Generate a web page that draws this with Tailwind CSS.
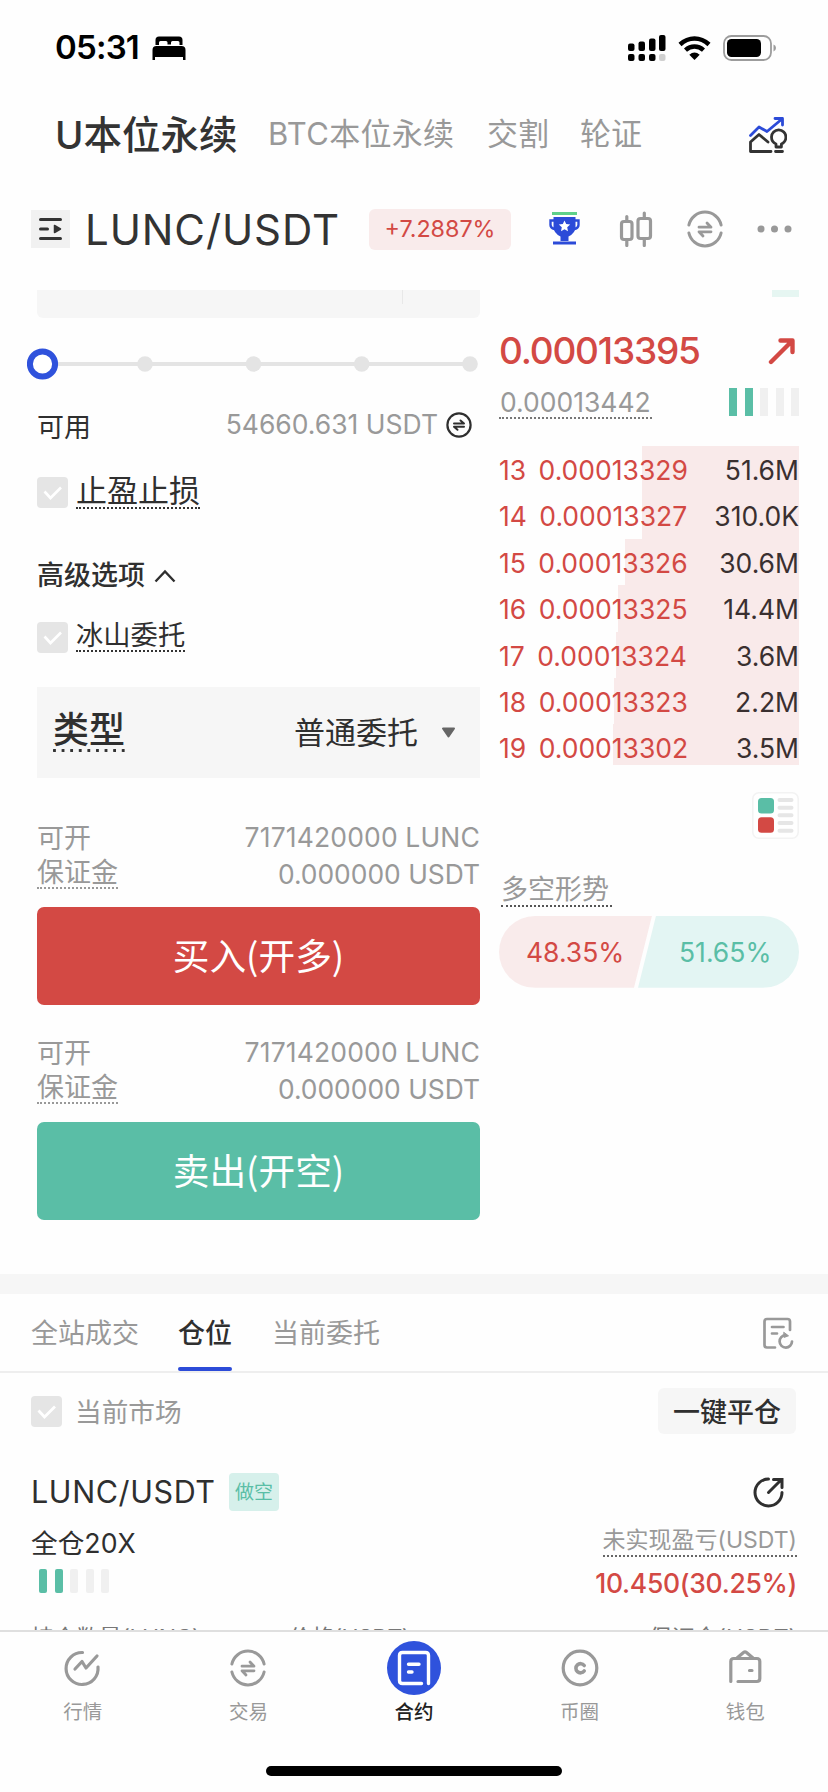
<!DOCTYPE html>
<html lang="zh-CN">
<head>
<meta charset="utf-8">
<title>LUNC/USDT</title>
<script src="https://cdn.jsdelivr.net/npm/@tailwindcss/browser@4"></script>
</head>
<body class="w-[828px] h-[1792px] overflow-hidden bg-[#fefefe] text-[#2f2f2f] font-[Inter,'Noto_Sans_CJK_SC',sans-serif] whitespace-nowrap">
<div class="flex flex-col h-[1630px] overflow-hidden">

  <!-- status bar -->
  <div class="flex items-center justify-between h-[94px] pt-px pl-[55px] pr-[51px] shrink-0 text-black">
    <div class="flex items-center">
      <span class="text-[33px] font-semibold tracking-[-0.800px] w-[97px]">05:31</span>
      <svg class="w-[34px] h-[24px]" viewBox="0 0 34 24"><path d="M3.500 9V4Q3.500 .5 7 .5h20q3.500 0 3.500 3.500V9h-3V6.500Q27.500 5 26 5h-5.500Q19 5 19 6.500V8.500h-3.500V6.500Q15.500 5 14 5H8.500Q7 5 7 6.500V9z"/><path d="M.5 24V14q0-4 4-4h25q4 0 4 4v10h-2.500v-3H3v3z"/></svg>
    </div>
    <div class="flex items-center">
      <svg class="w-[38px] h-[28px]" viewBox="0 0 38 28"><rect x="0" y="9.500" width="6.500" height="7.500" rx="2"/><rect x="10.500" y="7.500" width="6.500" height="9.500" rx="2"/><rect x="21" y="4.500" width="6.500" height="12.500" rx="2"/><rect x="31" y="1" width="6.500" height="16" rx="2"/><rect x="0" y="20" width="6.500" height="7" rx="2"/><rect x="10.500" y="20" width="6.500" height="7" rx="2"/><rect x="21" y="20" width="6.500" height="7" rx="2"/><rect x="31" y="20" width="6.500" height="7" rx="2" fill="#d0d0d0"/></svg>
      <svg class="ml-[12px] w-[33px] h-[24px]" viewBox="0 0 33 24" fill="none" stroke="#000" stroke-width="4.500"><path d="M2 8.500Q8.500 2.500 16.500 2.500T31 8.500"/><path d="M7.500 14.200Q11.500 10.600 16.500 10.600t9 3.600"/><path d="M11.300 18.700Q16.500 14.500 21.700 18.700L16.500 24z" fill="#000" stroke="none"/></svg>
      <svg class="ml-[12px] w-[54px] h-[26px]" viewBox="0 0 54 26"><rect x="1" y="1" width="47" height="24" rx="7.500" fill="none" stroke="#9c9c9c" stroke-width="1.800"/><rect x="4" y="4" width="34" height="18" rx="4.500"/><path d="M50.500 9.500q2.500 .8 2.500 3.500t-2.500 3.500z" fill="#9c9c9c"/></svg>
    </div>
  </div>

  <!-- market type tabs -->
  <div class="flex items-center h-[80px] pt-px pl-[55px] pr-[41px] shrink-0 text-[31px] text-[#999]">
    <span class="w-[213px] pt-[2px] text-[38.500px] font-medium text-[#333]">U本位永续</span>
    <span class="w-[219px] tracking-[0.300px]">BTC本位永续</span>
    <span class="w-[93px]">交割</span>
    <span>轮证</span>
    <svg class="ml-auto w-[38px] h-[36px]" viewBox="0 0 38 36" fill="none" stroke-width="2.800" stroke-linecap="round" stroke-linejoin="round"><path d="M1.500 18.500 10 10l8 4.500L33 2M26 1.500h7.500v6.500" stroke="#2c4bd8"/><path d="M19 25 10 17.500 1.500 25v9.500H22" stroke="#333"/><path d="M27 30v-3q-4.500-2-4.500-7a7.200 7.200 0 0 1 14.400 0q0 5-4.500 7v3zM26.500 34.500h7" stroke="#333" fill="#fefefe"/></svg>
  </div>

  <!-- pair header -->
  <div class="flex items-center h-[110px] pl-[31px] pr-[36px] shrink-0">
    <span class="w-[39px] h-[38px] bg-[#f1f1f1]"><svg class="w-[39px] h-[38px]" viewBox="0 0 39 38" fill="none" stroke="#333" stroke-width="3" stroke-linecap="round"><path d="M9.500 9.500h20M9.500 19h7M9.500 28.500h20"/><path d="M23.500 15.500v7l6-3.500z" fill="#333" stroke-width="1.500" stroke-linejoin="round"/></svg></span>
    <span class="ml-[15px] w-[284px] text-[42px] text-[#333] tracking-[0.900px]">LUNC/USDT</span>
    <span class="flex items-center justify-center w-[142px] h-[41px] rounded-[6px] bg-[#f9ebeb] text-[#d34944] text-[23.300px]">+7.2887%</span>
    <svg class="ml-[37px] w-[33px] h-[34px]" viewBox="0 0 33 34"><path d="M4 0h25v3H4z" fill="#5fd08a"/><path d="M5.500 5h22v10q0 6-7 9.500v4.500h-8V24.500Q5.500 21 5.500 15zM5 29.500h23v3H5z" fill="#2c4bd8"/><path d="M6 8.500H2.500V13q0 3 4 4M27 8.500h3.500V13q0 3-4 4" fill="none" stroke="#2c4bd8" stroke-width="2.400"/><path d="m16.500 8.500 1.700 3.600 4 .5-3 2.700.8 4-3.500-2-3.500 2 .8-4-3-2.700 4-.5z" fill="#fff"/></svg>
    <svg class="ml-[38px] w-[34px] h-[36px]" viewBox="0 0 34 36" fill="none" stroke="#999" stroke-width="3.200" stroke-linecap="round"><rect x="2.500" y="10.500" width="10.500" height="18" rx="2.500"/><rect x="19" y="7.500" width="12.500" height="20" rx="2.500"/><path d="M7.800 5.500v5M7.800 29v5.500M25.300 2v5M25.300 28v6.500"/></svg>
    <svg class="ml-[34px] w-[36px] h-[38px]" viewBox="0 0 36 38" fill="none" stroke="#999" stroke-width="3" stroke-linecap="round" stroke-linejoin="round"><path d="M1.900 15a16.500 16.500 0 0 1 32.200 0M1.900 23a16.500 16.500 0 0 0 32.200 0"/><path d="M12 17.200h12l-4-4.200M24 21.800H12l4 4.200" stroke-width="2.800"/></svg>
    <svg class="ml-[33px] w-[36px] h-[8px]" viewBox="0 0 36 8" fill="#999"><circle cx="5" cy="4" r="3.500"/><circle cx="18.500" cy="4" r="3.500"/><circle cx="32" cy="4" r="3.500"/></svg>
  </div>

  <!-- order form + book -->
  <div class="flex h-[990px] shrink-0 pt-[6px] pl-[37px] pr-[29px]">
    <div class="flex flex-col w-[443px]">
      <div class="h-[28px] bg-[#f6f6f6] rounded-b-[6px] pl-[365px] shrink-0"><div class="w-px h-[14px] bg-[#e8e8e8]"></div></div>
      <svg class="mt-[23px] -ml-[10px] w-[453px] h-[46px] shrink-0" viewBox="27 341 453 46"><path d="M50 364h420" stroke="#e4e4e4" stroke-width="4"/><g fill="#e4e4e4"><circle cx="145" cy="364" r="7.800"/><circle cx="253.500" cy="364" r="7.800"/><circle cx="361.700" cy="364" r="7.800"/><circle cx="470" cy="364" r="7.800"/></g><circle cx="42.500" cy="364" r="12.600" fill="#fff" stroke="#2f52dc" stroke-width="6"/></svg>
      <div class="flex items-center mt-[19px] h-[40px] shrink-0">
        <span class="text-[27px] pt-[5px]">可用</span>
        <span class="ml-auto text-[26.500px] text-[#999] pb-[3px]">54660.631 USDT</span>
        <svg class="ml-[8px] mr-[8px] mb-[3px] w-[26px] h-[26px]" viewBox="0 0 26 26" fill="none" stroke="#2f2f2f" stroke-width="2.200" stroke-linecap="round" stroke-linejoin="round"><circle cx="13" cy="13" r="11.600"/><path d="M8 11.500h10l-3.500-3M18 14.800H8l3.500 3" stroke-width="2"/></svg>
      </div>
      <div class="flex items-start mt-[31px] h-[32px] shrink-0">
        <span class="w-[31px] h-[31px] rounded-[4px] bg-[#e5e5e5]"><svg class="w-[31px] h-[31px]" viewBox="0 0 31 31" fill="none" stroke="#fff" stroke-width="2.600"><path d="m7.500 14.500 6 6.500L24 10.500"/></svg></span>
        <span class="ml-[8px] h-[32px] leading-[28px] text-[31px] border-b-2 border-dotted border-[#333]">止盈止损</span>
      </div>
      <div class="flex items-center mt-[51px] h-[30px] pt-[2px] text-[27px] font-medium shrink-0">高级选项
        <svg class="ml-[9px] w-[22px] h-[14px]" viewBox="0 0 22 14" fill="none" stroke="#2f2f2f" stroke-width="2.400"><path d="m1.500 12.500 9.500-10 9.500 10"/></svg>
      </div>
      <div class="flex items-start mt-[32px] h-[32px] shrink-0">
        <span class="w-[31px] h-[31px] rounded-[4px] bg-[#e5e5e5]"><svg class="w-[31px] h-[31px]" viewBox="0 0 31 31" fill="none" stroke="#fff" stroke-width="2.600"><path d="m7.500 14.500 6 6.500L24 10.500"/></svg></span>
        <span class="ml-[8px] h-[30px] leading-[27px] text-[27.300px] border-b-2 border-dotted border-[#333]">冰山委托</span>
      </div>
      <div class="flex items-start mt-[33px] h-[91px] pl-[16px] bg-[#f6f6f6] shrink-0">
        <span class="flex flex-col w-[72px] mt-[22px]"><span class="leading-[42px] h-[40px] text-[36px] font-medium">类型</span><span class="h-[3px] bg-[radial-gradient(circle_at_1.500px_1.500px,#333_1.400px,transparent_1.700px)] bg-[size:8.600px_3px]"></span></span>
        <span class="ml-auto leading-[92px] text-[31px]">普通委托</span>
        <svg class="ml-[23px] mr-[24px] mt-[40px] w-[15px] h-[12px]" viewBox="0 0 15 12"><path d="M2 1.500h11L7.500 9.500z" fill="#666" stroke="#666" stroke-width="2" stroke-linejoin="round"/></svg>
      </div>
      <div class="flex justify-between mt-[44px] h-[85px] text-[#999] text-[27px] shrink-0">
        <div class="flex flex-col items-start"><span class="leading-[33px] h-[32px]">可开</span><span class="h-[35px] leading-[37px] border-b-2 border-dotted border-[#999]">保证金</span></div>
        <div class="flex flex-col items-end text-[26.400px]"><span class="leading-[31px] text-[26.500px] tracking-[0.150px]">7171420000 LUNC</span><span class="leading-[43px]">0.000000 USDT</span></div>
      </div>
      <div class="flex items-center justify-center h-[98px] pb-[2px] rounded-[7px] bg-[#d34944] text-white text-[36.700px] font-['Noto_Sans_CJK_SC',sans-serif] shrink-0">买入(开多)</div>
      <div class="flex justify-between mt-[32px] h-[85px] text-[#999] text-[27px] shrink-0">
        <div class="flex flex-col items-start"><span class="leading-[33px] h-[32px]">可开</span><span class="h-[35px] leading-[37px] border-b-2 border-dotted border-[#999]">保证金</span></div>
        <div class="flex flex-col items-end text-[26.400px]"><span class="leading-[31px] text-[26.500px] tracking-[0.150px]">7171420000 LUNC</span><span class="leading-[43px]">0.000000 USDT</span></div>
      </div>
      <div class="flex items-center justify-center h-[98px] pb-[2px] rounded-[7px] bg-[#5abea6] text-white text-[36.700px] font-['Noto_Sans_CJK_SC',sans-serif] shrink-0">卖出(开空)</div>
    </div>

    <div class="flex flex-col ml-[19px] w-[300px]">
      <div class="ml-auto w-[27px] h-[7px] bg-[#e6f6f2]"></div>
      <div class="flex items-center justify-between mt-[30px] h-[48px] text-[#d34944]">
        <span class="text-[37px] font-medium tracking-[-1.200px]">0.00013395</span>
        <svg class="mr-[3px] w-[28px] h-[28px]" viewBox="0 0 28 28" fill="none" stroke="#d34944" stroke-width="4.400" stroke-linecap="round" stroke-linejoin="round"><path d="M3 25 24 4M12.500 3.500h12V15"/></svg>
      </div>
      <div class="flex items-center justify-between mt-[10px] h-[34px]">
        <span class="h-[34px] leading-[34px] px-px text-[26.500px] text-[#999] border-b-2 border-dotted border-[#777]">0.00013442</span>
        <span class="flex gap-[7.500px] h-[28px]"><i class="w-[8px] bg-[#5abea6]"></i><i class="w-[8px] bg-[#5abea6]"></i><i class="w-[8px] bg-[#f0f0f0]"></i><i class="w-[8px] bg-[#f0f0f0]"></i><i class="w-[8px] bg-[#f0f0f0]"></i></span>
      </div>
      <div class="flex flex-col mt-[27px] text-[26.500px] leading-[48px] [word-spacing:5px] text-[#d34944]">
        <div class="relative flex justify-between h-[46.400px]"><i class="absolute right-0 inset-y-0 w-[157px] bg-[#f9eaea]"></i><span class="relative">13 0.00013329</span><span class="relative text-[#3a3030]">51.6M</span></div>
        <div class="relative flex justify-between h-[46.400px]"><i class="absolute right-0 inset-y-0 w-[157px] bg-[#f9eaea]"></i><span class="relative">14 0.00013327</span><span class="relative text-[#3a3030]">310.0K</span></div>
        <div class="relative flex justify-between h-[46.400px]"><i class="absolute right-0 inset-y-0 w-[174px] bg-[#f9eaea]"></i><span class="relative">15 0.00013326</span><span class="relative text-[#3a3030]">30.6M</span></div>
        <div class="relative flex justify-between h-[46.400px]"><i class="absolute right-0 inset-y-0 w-[181px] bg-[#f9eaea]"></i><span class="relative">16 0.00013325</span><span class="relative text-[#3a3030]">14.4M</span></div>
        <div class="relative flex justify-between h-[46.400px]"><i class="absolute right-0 inset-y-0 w-[183px] bg-[#f9eaea]"></i><span class="relative">17 0.00013324</span><span class="relative text-[#3a3030]">3.6M</span></div>
        <div class="relative flex justify-between h-[46.400px]"><i class="absolute right-0 inset-y-0 w-[185px] bg-[#f9eaea]"></i><span class="relative">18 0.00013323</span><span class="relative text-[#3a3030]">2.2M</span></div>
        <div class="relative flex justify-between h-[40.300px]"><i class="absolute right-0 inset-y-0 w-[186px] bg-[#f9eaea]"></i><span class="relative">19 0.00013302</span><span class="relative text-[#3a3030]">3.5M</span></div>
      </div>
      <svg class="ml-auto mt-[27px] w-[47px] h-[47px]" viewBox="0 0 47 47"><rect x=".8" y=".8" width="45.400" height="45.400" rx="6" fill="#fff" stroke="#f3f3f3" stroke-width="1.600"/><rect x="6" y="6" width="16" height="15.500" rx="3.500" fill="#5abea6"/><rect x="6" y="25.300" width="16" height="15.500" rx="3.500" fill="#d34944"/><path d="M27.500 8h12M27.500 15.700h12M27.500 23.300h12M27.500 31h12M27.500 38.800h12" stroke="#e6e6e6" stroke-width="4" stroke-linecap="round"/></svg>
      <div class="flex mt-[32px]"><span class="h-[36px] leading-[37px] pr-[3px] ml-[2px] text-[27px] text-[#999] border-b-2 border-dotted border-[#555]">多空形势</span></div>
      <div class="flex mt-[9px] h-[72px] text-[26.500px] leading-[72px] rounded-full overflow-hidden">
        <span class="w-[153px] pl-[27px] bg-[#f9ebeb] text-[#d34944] [clip-path:polygon(0_0,100%_0,calc(100%-18px)_100%,0_100%)]">48.35%</span>
        <span class="w-[161px] -ml-[14px] pl-[41px] bg-[#e3f5f3] text-[#5abea6] [clip-path:polygon(18px_0,100%_0,100%_100%,0_100%)]">51.65%</span>
      </div>
    </div>
  </div>

  <!-- positions -->
  <div class="h-[20px] bg-[#f6f6f6] shrink-0"></div>
  <div class="flex h-[79px] pl-[31px] pr-[34px] border-b-2 border-[#eee] text-[27px] leading-[80px] text-[#999] shrink-0">
    <span class="w-[147px]">全站成交</span>
    <span class="flex flex-col w-[54px] mr-[40px] font-medium text-[#2f2f2f]"><span class="h-[73px]">仓位</span><i class="h-[4px] rounded-full bg-[#2c4bd8]"></i></span>
    <span>当前委托</span>
    <svg class="ml-auto mt-[23px] w-[32px] h-[33px]" viewBox="0 0 32 33" fill="none" stroke="#999" stroke-width="2.700" stroke-linecap="round" stroke-linejoin="round"><path d="M13 30.500H5q-2.500 0-2.500-2.500V4.500Q2.500 2 5 2h20.500Q28 2 28 4.500V13M10 10h11.500M10 16.500h5"/><path d="M23.500 18.200a6.200 6.200 0 1 0 6.500 6.300"/><path d="m22 15.500 4.500 3.300-4 1.500z" fill="#999" stroke-width="1"/></svg>
  </div>
  <div class="flex items-center mt-[15px] h-[46px] pl-[31px] pr-[32px] shrink-0">
    <span class="w-[31px] h-[31px] rounded-[4px] bg-[#e5e5e5]"><svg class="w-[31px] h-[31px]" viewBox="0 0 31 31" fill="none" stroke="#fff" stroke-width="2.800"><path d="m7.500 14.500 6 6.500L24 10.500"/></svg></span>
    <span class="ml-[13px] text-[26.700px] text-[#999] pt-[3px]">当前市场</span>
    <span class="ml-auto w-[138px] h-[46px] leading-[49px] text-center rounded-[6px] bg-[#f6f6f6] text-[27px] font-medium">一键平仓</span>
  </div>
  <div class="flex items-center mt-[39px] h-[38px] pl-[31px] pr-[44px] shrink-0">
    <span class="w-[198px] text-[30.500px] tracking-[0.600px]">LUNC/USDT</span>
    <span class="w-[50px] h-[38px] leading-[40px] text-center rounded-[4px] bg-[#d6f0eb] text-[#5abea6] text-[19px]">做空</span>
    <svg class="ml-auto w-[31px] h-[31px]" viewBox="0 0 31 31" fill="none" stroke="#2f2f2f" stroke-width="3"><path d="M15.500 2A13.500 13.500 0 1 0 29 15.500" stroke-linecap="round"/><path d="M15.500 15.500 28 3M20.500 2.500h8.500v8" stroke-linecap="round"/></svg>
  </div>
  <div class="flex justify-between pl-[31px] pr-[31px] h-[88px] shrink-0">
    <div class="flex flex-col pt-[16px]"><span class="leading-[32px] text-[26.700px]">全仓20X</span>
      <span class="flex gap-[7.500px] h-[24px] mt-[10px] ml-[8px]"><i class="w-[8px] rounded-[2px] bg-[#5abea6]"></i><i class="w-[8px] rounded-[2px] bg-[#5abea6]"></i><i class="w-[8px] rounded-[2px] bg-[#f0f0f0]"></i><i class="w-[8px] rounded-[2px] bg-[#f0f0f0]"></i><i class="w-[8px] rounded-[2px] bg-[#f0f0f0]"></i></span></div>
    <div class="flex flex-col items-end pt-[12px]"><span class="h-[34px] leading-[34px] text-[23px] text-[#999] border-b-2 border-dotted border-[#666]">未实现盈亏(USDT)</span>
      <span class="mt-[11px] leading-[30px] text-[26.500px] font-medium tracking-[-0.300px] text-[#d34944]">10.450(30.25%)</span></div>
  </div>
  <div class="flex pl-[31px] pr-[31px] mt-[27px] h-[24px] leading-[24px] text-[23px] text-[#777] shrink-0">
    <span class="w-[258px] tracking-[-0.400px]">持仓数量(LUNC)</span><span class="tracking-[-0.600px]">价格(USDT)</span><span class="ml-auto">保证金(USDT)</span>
  </div>
</div>

<!-- bottom navigation -->
<div class="flex flex-col items-center h-[162px] border-t-2 border-[#dfdfdf] bg-[#fefefe]">
  <div class="grid grid-cols-5 w-full h-[96px] text-[19.500px] text-[#999] text-center">
    <div class="flex flex-col items-center pt-[9px]"><svg class="w-[54px] h-[54px]" viewBox="0 0 54 54" fill="none" stroke="#999" stroke-width="3.200" stroke-linecap="round" stroke-linejoin="round"><path d="M26.500 11.500A16 16 0 1 0 42 26"/><path d="m19 28 7-7.500 4 6.500 11-12"/></svg><span class="leading-[34px]">行情</span></div>
    <div class="flex flex-col items-center pt-[9px]"><svg class="w-[54px] h-[54px]" viewBox="0 0 54 54" fill="none" stroke="#999" stroke-width="3" stroke-linecap="round" stroke-linejoin="round"><path d="M10.900 23a16.500 16.500 0 0 1 32.200 0M10.900 31a16.500 16.500 0 0 0 32.200 0"/><path d="M21 25.200h12l-4-4.200M33 29.800H21l4 4.200" stroke-width="2.800"/></svg><span class="leading-[34px]">交易</span></div>
    <div class="flex flex-col items-center pt-[9px] text-[#222] font-medium"><svg class="w-[54px] h-[54px]" viewBox="0 0 54 54" fill="none" stroke="#fff" stroke-width="3.400" stroke-linecap="round" stroke-linejoin="round"><circle cx="27" cy="27" r="27" fill="#2f52dc" stroke="none"/><path d="M34.500 42.500H15.500q-3 0-3-3v-25q0-3 3-3h23q3 0 3 3v28M21.500 23.200h10.500M21.500 31h3.500"/></svg><span class="leading-[34px]">合约</span></div>
    <div class="flex flex-col items-center pt-[9px]"><svg class="w-[54px] h-[54px]" viewBox="0 0 54 54" fill="none" stroke="#999" stroke-width="3.200" stroke-linecap="round"><circle cx="27" cy="27" r="16.800"/><path d="M31.200 24.500a4.600 4.600 0 1 0 0 5.500" stroke-width="3.600"/></svg><span class="leading-[34px]">币圈</span></div>
    <div class="flex flex-col items-center pt-[9px]"><svg class="w-[54px] h-[54px]" viewBox="0 0 54 54" fill="none" stroke="#999" stroke-width="3.200" stroke-linecap="round" stroke-linejoin="round"><path d="M12.800 40.500V20.500q0-3 3-3h23q3 0 3 3V37.500q0 3-3 3H20M19 17l6.500-5.500q1.500-1.200 3 0L35 17M31.500 29.500h2.500"/></svg><span class="leading-[34px]">钱包</span></div>
  </div>
  <div class="mt-[38px] w-[296px] h-[10px] rounded-full bg-black"></div>
</div>
</body>
</html>
